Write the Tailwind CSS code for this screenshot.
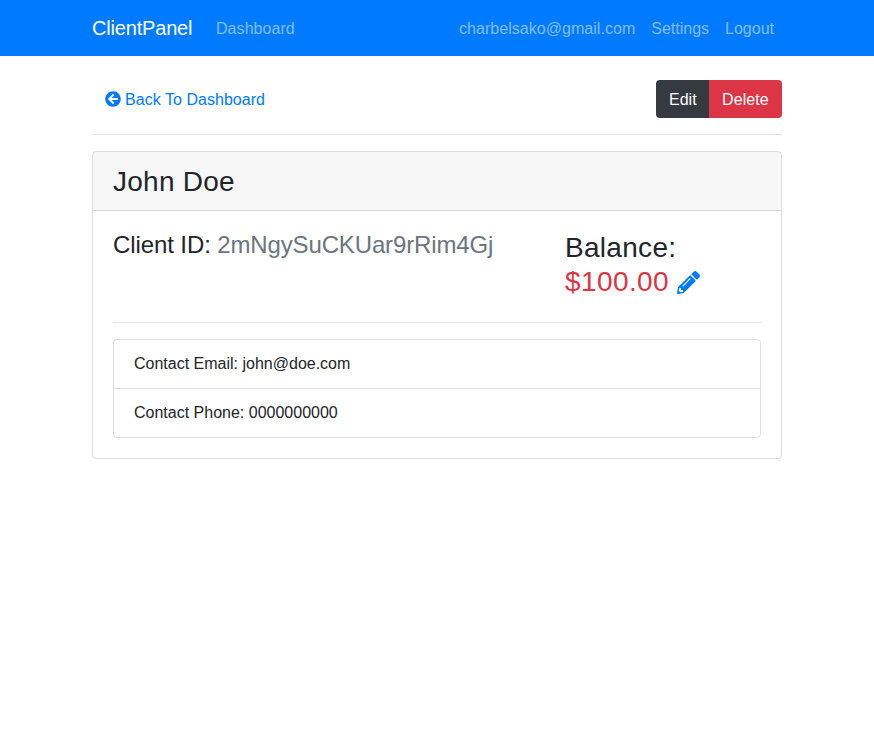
<!DOCTYPE html>
<html lang="en">
<head>
<meta charset="utf-8">
<title>ClientPanel</title>
<script src="https://cdn.jsdelivr.net/npm/@tailwindcss/browser@4"></script>
</head>
<body class="bg-white text-base leading-6 text-[#212529] font-['Liberation_Sans',Arial,sans-serif]">
<nav class="h-14 bg-[#007bff]">
  <div class="mx-auto flex h-full w-[690px] items-center">
    <a href="#" class="mr-4 w-[100px] text-xl leading-[30px] tracking-[-0.18px] whitespace-nowrap text-white">ClientPanel</a>
    <a href="#" class="px-2 pt-[10px] pb-2 tracking-[0.06px] text-white/50">Dashboard</a>
    <div class="ml-auto flex text-white/50">
      <a href="#" class="px-2 pt-[10px] pb-2 tracking-[0.04px]">charbelsako@gmail.com</a>
      <a href="#" class="px-2 pt-[10px] pb-2">Settings</a>
      <a href="#" class="px-2 pt-[10px] pb-2">Logout</a>
    </div>
  </div>
</nav>
<main class="mx-auto w-[690px] pt-6">
  <div class="flex justify-between">
    <a href="#" class="flex h-[38px] items-center gap-1 px-[13px] text-[#007bff]">
      <svg class="size-4" viewBox="0 0 512 512" fill="currentColor"><path d="M256 504C119 504 8 393 8 256S119 8 256 8s248 111 248 248-111 248-248 248zm28.900-143.600L209.400 288H392c13.300 0 24-10.700 24-24v-16c0-13.300-10.700-24-24-24H209.400l75.500-72.400c9.700-9.300 9.900-24.800.4-34.300l-11-10.900c-9.400-9.400-24.600-9.400-33.900 0L107.700 239c-9.400 9.400-9.400 24.600 0 33.900l132.700 132.700c9.400 9.400 24.600 9.400 33.900 0l11-10.900c9.500-9.500 9.300-25-.4-34.300z"/></svg>
      <span class="pt-[2px] tracking-[0.04px]">Back To Dashboard</span>
    </a>
    <div class="flex text-white">
      <a href="#" class="flex h-[38px] w-[54px] items-center rounded-l bg-[#343a40] pt-[2px] pl-[13px]">Edit</a>
      <a href="#" class="-ml-px flex h-[38px] w-[73px] items-center rounded-r bg-[#dc3545] pt-[2px] pl-[13px] tracking-[0.1px]">Delete</a>
    </div>
  </div>
  <hr class="my-4 border-black/10">
  <section class="rounded border border-black/[.125]">
    <h3 class="border-b border-black/[.125] bg-black/[.03] px-5 pt-[13px] pb-[11px] text-[28px] leading-[33.6px] tracking-[0.25px]">John Doe</h3>
    <div class="p-5">
      <div class="flex h-[75px] justify-between">
        <h4 class="text-2xl leading-[28.8px] tracking-[-0.1px]">Client ID: <span class="tracking-[-0.14px] text-[#6c757d]">2mNgySuCKUar9rRim4Gj</span></h4>
        <h3 class="w-[196px] text-[28px] leading-[34px] tracking-[0.3px]">Balance:<br><span class="tracking-[0.4px] text-[#dc3545]">$100.00</span>
          <a href="#" class="text-[#007bff]"><svg class="inline size-[23px] align-[-3.5px]" viewBox="0 0 512 512" fill="currentColor"><path d="M497.900 142.100l-46.100 46.100c-4.700 4.700-12.300 4.700-17 0l-111-111c-4.700-4.700-4.700-12.300 0-17l46.100-46.100c18.700-18.700 49.100-18.700 67.900 0l60.100 60.100c18.800 18.700 18.800 49.100 0 67.900zM284.200 99.800L21.600 362.400.4 483.900c-2.900 16.400 11.400 30.600 27.800 27.800l121.500-21.300 262.600-262.600c4.700-4.700 4.700-12.300 0-17l-111-111c-4.800-4.700-12.400-4.700-17.100 0zM124.100 339.900c-5.500-5.500-5.500-14.300 0-19.800l154-154c5.500-5.500 14.300-5.500 19.800 0s5.500 14.300 0 19.800l-154 154c-5.500 5.500-14.300 5.500-19.800 0zM88 424h48v36.300l-64.500 11.300-31.100-31.100L51.700 376H88v48z"/></svg></a>
        </h3>
      </div>
      <hr class="my-4 border-black/10">
      <ul class="rounded border border-black/[.125]">
        <li class="border-b border-black/[.125] px-5 py-3">Contact Email: john@doe.com</li>
        <li class="px-5 py-3">Contact Phone: 0000000000</li>
      </ul>
    </div>
  </section>
</main>
</body>
</html>
